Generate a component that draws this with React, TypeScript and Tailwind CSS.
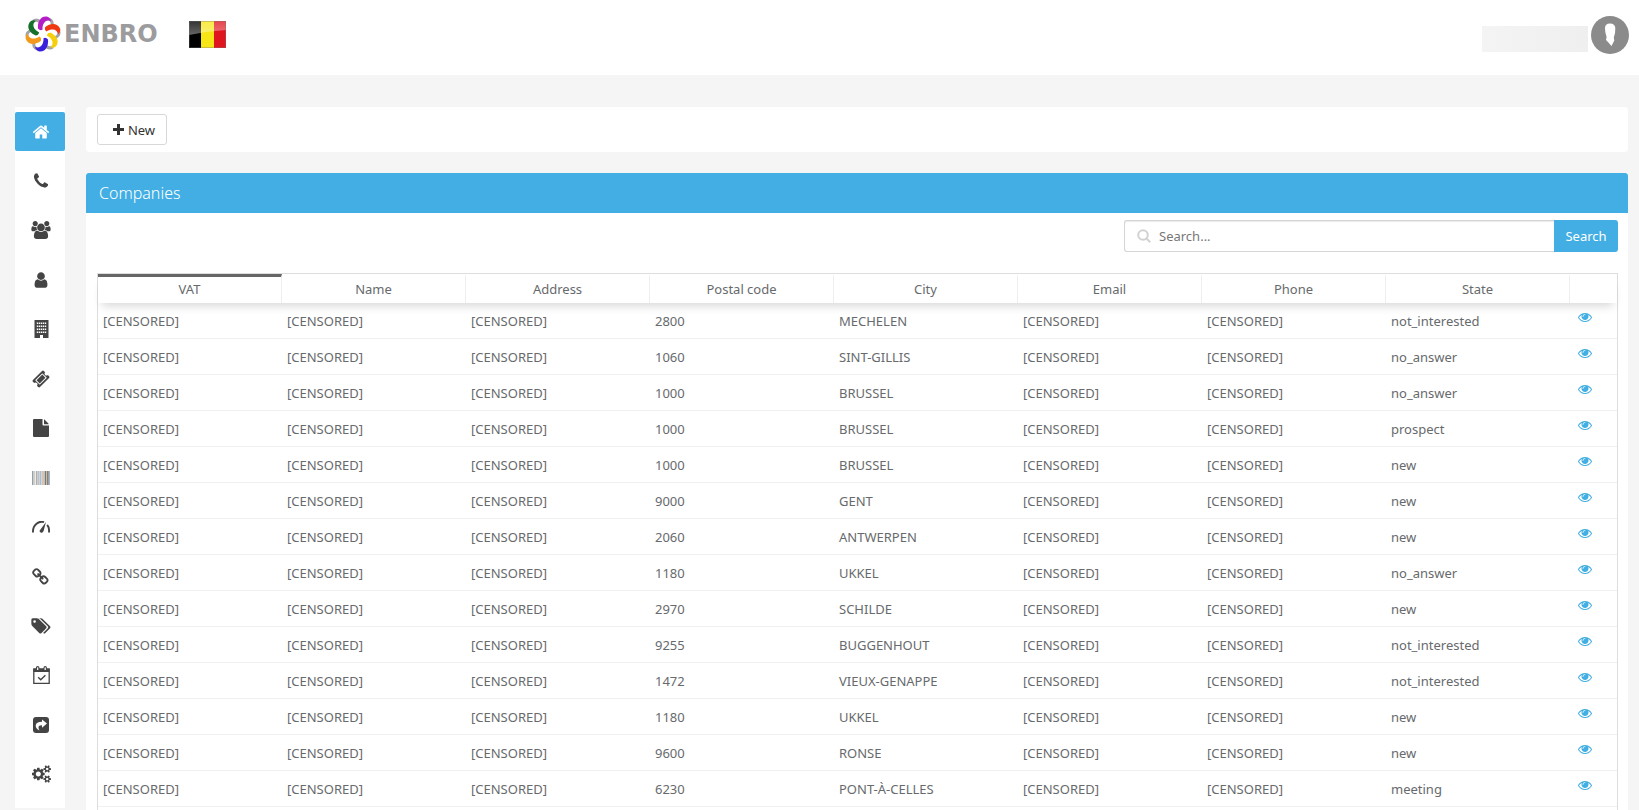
import React from "react";

const BIG = "0 0 1792 1792";

function Glyph({ d, className, viewBox = BIG }: { d: string; className: string; viewBox?: string }) {
  return (
    <svg viewBox={viewBox} className={className} fill="currentColor" overflow="visible" aria-hidden="true">
      <path d={d} fillRule="evenodd" />
    </svg>
  );
}

const paths = {
  home: "M1472 992v480q0 26-19 45t-45 19h-384v-384h-256v384h-384q-26 0-45-19t-19-45v-480q0-1 .5-3t.5-3l575-474 575 474q1 2 1 6zm223-69l-62 74q-8 9-21 11h-3q-13 0-21-7l-692-577-692 577q-12 8-24 7-13-2-21-11l-62-74q-8-10-7-23.5t11-21.5l719-599q32-26 76-26t76 26l244 204v-195q0-14 9-23t23-9h192q14 0 23 9t9 23v408l219 182q10 8 11 21.5t-7 23.5z",
  phone: "M1600 1240q0 27-10 70.5t-21 68.5q-21 50-122 106-94 51-186 51-27 0-53-3.5t-57.5-12.5-47-14.5-55.5-20.5-49-18q-98-35-175-83-127-79-264-216t-216-264q-48-77-83-175-3-9-18-49t-20.5-55.5-14.5-47-12.5-57.5-3.5-53q0-92 51-186 56-101 106-122 25-11 68.5-21t70.5-10q14 0 21 3 18 6 53 76 11 19 30 54t35 63.5 31 53.5q3 4 17.5 25t21.5 35.5 7 28.5q0 20-28.5 50t-62 55-62 53-28.5 46q0 9 5 22.5t8.5 20.5 14 24 11.5 19q76 137 174 235t235 174q2 1 19 11.5t24 14 20.5 8.5 22.5 5q18 0 46-28.5t53-62 55-62 50-28.5q14 0 28.5 7t35.5 21.5 25 17.5q25 15 53.5 31t63.5 35 54 30q70 35 76 53 3 7 3 21z",
  users: "M529 896q-162 5-265 128h-134q-82 0-138-40.5t-56-118.5q0-353 124-353 6 0 43.5 21t97.5 42.5 119 21.5q67 0 133-23-5 37-5 66 0 139 81 256zm1071 637q0 120-73 189.5t-194 69.5h-874q-121 0-194-69.5t-73-189.5q0-53 3.5-103.5t14-109 26.5-108.5 43-97.5 62-81 85.5-53.5 111.5-20q10 0 43 21.5t73 48 107 48 135 21.5 135-21.5 107-48 73-48 43-21.5q61 0 111.5 20t85.5 53.5 62 81 43 97.5 26.5 108.5 14 109 3.5 103.5zm-1024-1277q0 106-75 181t-181 75-181-75-75-181 75-181 181-75 181 75 75 181zm704 384q0 159-112.5 271.5t-271.5 112.5-271.5-112.5-112.5-271.5 112.5-271.5 271.5-112.5 271.5 112.5 112.5 271.5zm576 225q0 78-56 118.5t-138 40.5h-134q-103-123-265-128 81-117 81-256 0-29-5-66 66 23 133 23 59 0 119-21.5t97.5-42.5 43.5-21q124 0 124 353zm-128-609q0 106-75 181t-181 75-181-75-75-181 75-181 181-75 181 75 75 181z",
  user: "M1536 1399q0 109-62.5 187t-150.5 78h-854q-88 0-150.5-78t-62.5-187q0-85 8.5-160.5t31.5-152 58.5-131 94-89 134.5-34.5q131 128 313 128t313-128q76 0 134.5 34.5t94 89 58.5 131 31.5 152 8.5 160.5zm-256-887q0 159-112.5 271.5t-271.5 112.5-271.5-112.5-112.5-271.5 112.5-271.5 271.5-112.5 271.5 112.5 112.5 271.5z",
  ticket: "M1024 452l316 316-572 572-316-316zm-211 979l618-618q19-19 19-45t-19-45l-362-362q-18-18-45-18t-45 18l-618 618q-19 19-19 45t19 45l362 362q18 18 45 18t45-18zm889-637l-907 908q-37 37-90.5 37t-90.5-37l-126-126q56-56 56-136t-56-136-136-56-136 56l-125-126q-37-37-37-90.5t37-90.5l907-906q37-37 90.5-37t90.5 37l125 125q-56 56-56 136t56 136 136 56 136-56l126 125q37 37 37 90.5t-37 90.5z",
  link: "M1456 1216q0-40-28-68l-208-208q-28-28-68-28-42 0-72 32 3 3 19 18.5t21.5 21.5 15 19 13 25.5 3.5 27.5q0 40-28 68t-68 28q-15 0-27.5-3.5t-25.5-13-19-15-21.5-21.5-18.5-19q-33 31-33 73 0 40 28 68l206 207q27 27 68 27 40 0 68-26l147-146q28-28 28-67zm-703-705q0-40-28-68l-206-207q-28-28-68-28-39 0-68 27l-147 146q-28 28-28 67 0 40 28 68l208 208q27 27 68 27 42 0 72-31-3-3-19-18.5t-21.5-21.5-15-19-13-25.5-3.5-27.5q0-40 28-68t68-28q15 0 27.5 3.5t25.5 13 19 15 21.5 21.5 18.5 19q33-31 33-73zm895 705q0 120-85 203l-147 146q-83 83-203 83-121 0-204-85l-206-207q-83-83-83-203 0-123 88-209l-88-88q-86 88-208 88-120 0-204-84l-208-208q-84-84-84-204t85-203l147-146q83-83 203-83 121 0 204 85l206 207q83 83 83 203 0 123-88 209l88 88q86-88 208-88 120 0 204 84l208 208q84 84 84 204z",
  tags: "M384 448q0-53-37.5-90.5t-90.5-37.5-90.5 37.5-37.5 90.5 37.5 90.5 90.5 37.5 90.5-37.5 37.5-90.5zm1067 576q0 53-37 90l-491 492q-39 37-91 37-53 0-90-37l-715-716q-38-37-64.5-101t-26.5-117v-416q0-52 38-90t90-38h416q53 0 117 26.5t102 64.5l715 714q37 39 37 91zm384 0q0 53-37 90l-491 492q-39 37-91 37-36 0-59-14t-53-45l470-470q37-37 37-90 0-52-37-91l-715-714q-38-38-102-64.5t-117-26.5h224q53 0 117 26.5t102 64.5l715 714q37 39 37 91z",
  cogs: "M896 896q0-106-75-181t-181-75-181 75-75 181 75 181 181 75 181-75 75-181zm768 512q0-52-38-90t-90-38-90 38-38 90q0 53 37.5 90.5t90.5 37.5 90.5-37.5 37.5-90.5zm0-1024q0-52-38-90t-90-38-90 38-38 90q0 53 37.5 90.5t90.5 37.5 90.5-37.5 37.5-90.5zm-384 421v185q0 10-7 19.5t-16 10.5l-155 24q-11 35-32 76 34 48 90 115 7 11 7 20 0 12-7 19-23 30-82.5 89.5t-78.5 59.5q-11 0-21-7l-115-90q-37 19-77 31-11 108-23 155-7 24-30 24h-186q-11 0-20-7.5t-10-17.5l-23-153q-34-10-75-31l-118 89q-7 7-20 7-11 0-21-8-144-133-144-160 0-9 7-19 10-14 41-53t47-61q-23-44-35-82l-152-24q-10-1-17-9.5t-7-19.5v-185q0-10 7-19.5t16-10.5l155-24q11-35 32-76-34-48-90-115-7-11-7-20 0-12 7-20 22-30 82-89t79-59q11 0 21 7l115 90q34-18 77-32 11-108 23-154 7-24 30-24h186q11 0 20 7.5t10 17.5l23 153q34 10 75 31l118-89q8-7 20-7 11 0 21 8 144 133 144 160 0 8-7 19-12 16-42 54t-45 60q23 48 34 82l152 23q10 2 17 10.5t7 19.5zm640 533v140q0 16-149 31-12 27-30 52 51 113 51 138 0 4-4 7-122 71-124 71-8 0-46-47t-52-68q-20 2-30 2t-30-2q-14 21-52 68t-46 47q-2 0-124-71-4-3-4-7 0-25 51-138-18-25-30-52-149-15-149-31v-140q0-16 149-31 13-29 30-52-51-113-51-138 0-4 4-7 4-2 35-20t59-34 30-16q8 0 46 46.5t52 67.5q20-2 30-2t30 2q51-71 92-112l6-2q4 0 124 70 4 3 4 7 0 25-51 138 17 23 30 52 149 15 149 31zm0-1024v140q0 16-149 31-12 27-30 52 51 113 51 138 0 4-4 7-122 71-124 71-8 0-46-47t-52-68q-20 2-30 2t-30-2q-14 21-52 68t-46 47q-2 0-124-71-4-3-4-7 0-25 51-138-18-25-30-52-149-15-149-31v-140q0-16 149-31 13-29 30-52-51-113-51-138 0-4 4-7 4-2 35-20t59-34 30-16q8 0 46 46.5t52 67.5q20-2 30-2t30 2q51-71 92-112l6-2q4 0 124 70 4 3 4 7 0 25-51 138 17 23 30 52 149 15 149 31z",
  eye: "M1664 960q-152-236-381-353 61 104 61 225 0 185-131.5 316.5t-316.5 131.5-316.5-131.5-131.5-316.5q0-121 61-225-229 117-381 353 133 205 333.5 326.5t434.5 121.5 434.5-121.5 333.5-326.5zm-720-384q0-20-14-34t-34-14q-125 0-214.5 89.5t-89.5 214.5q0 20 14 34t34 14 34-14 14-34q0-86 61-147t147-61q20 0 34-14t14-34zm848 384q0 34-20 69-140 230-376.5 368.5t-499.5 138.5-499.5-139-376.5-368q-20-35-20-69t20-69q140-229 376.5-368t499.5-139 499.5 139 376.5 368q20 35 20 69z",
};

function BuildingIcon() {
  const rows = [3, 6, 9, 12];
  const cols = [3, 5, 7, 9, 11];
  return (
    <svg viewBox="0 0 15 18" className="h-[18px] w-[15px]" aria-hidden="true">
      <path d="M.5 0h14v18H9v-3H6v3H.5z" fill="currentColor" />
      {rows.map((y) => cols.map((x) => <rect key={`${x}-${y}`} x={x - 0.2} y={y - 0.5} width="1.4" height="1.5" fill="#fff" />))}
    </svg>
  );
}

function FileIcon() {
  return (
    <svg viewBox="0 0 16 18" className="h-[18px] w-4" fill="currentColor" aria-hidden="true">
      <path d="M1 0h8.500v5.500q0 1 1 1H16V17q0 1-1 1H1q-1 0-1-1V1q0-1 1-1zM11 .3q.4.2.7.500l3.500 3.500q.3.300.5.900H11z" />
    </svg>
  );
}

function BarcodeIcon() {
  const bars: [number, number, string][] = [
    [0, 1, "#a89b90"], [1, 1, "#b7d0e2"], [2, 1, "#dccdc2"], [3, 1, "#e6ecef"], [4, 1, "#a3b1c0"], [5, 1, "#d6cbc0"],
    [6, 1, "#b4c4d1"], [7, 1, "#d9cfd0"], [8, 1, "#b0bcc8"], [9, 1, "#cdd8e0"], [10, 2, "#d8c2b1"],
    [12, 1, "#b9c4cb"], [13, 1, "#7d7770"], [14, 1, "#c9bda4"], [15, 1, "#85807a"], [16, 1, "#8ca3c0"], [17, 1, "#b4b0b0"],
  ];
  return (
    <svg viewBox="0 0 18 14" className="h-[14px] w-[18px]" aria-hidden="true">
      {bars.map(([x, w, c]) => <rect key={x} x={x} width={w} height="14" fill={c} />)}
    </svg>
  );
}

function GaugeIcon() {
  return (
    <svg viewBox="0 0 18 12" className="h-3 w-[18px]" aria-hidden="true">
      <path d="M1 11.500Q.6 6 4.500 2.800T12 1.200M15.200 3.800Q17.500 6.500 17 11.500" fill="none" stroke="currentColor" strokeWidth="1.900" />
      <path d="M14 1L11.500 10.300Q10.500 12.200 8.700 11.400T8.100 9z" fill="currentColor" />
    </svg>
  );
}

function CalendarIcon() {
  return (
    <svg viewBox="0 0 17 18" className="h-[18px] w-[17px]" fill="none" stroke="currentColor" aria-hidden="true">
      <path d="M.8 3h15.400v14.300H.8z" strokeWidth="1.300" />
      <path d="M.5 3h16v3H.5z" fill="currentColor" stroke="none" />
      <rect x="3.500" y=".6" width="2.400" height="4" rx="1.200" fill="#fff" strokeWidth="1.100" />
      <rect x="11" y=".6" width="2.400" height="4" rx="1.200" fill="#fff" strokeWidth="1.100" />
      <path d="M5.200 11.200l2.500 2.500 4.700-4.500" strokeWidth="1.400" />
    </svg>
  );
}

function ShareIcon() {
  return (
    <svg viewBox="0 0 16 16" className="size-4" aria-hidden="true">
      <rect width="16" height="16" rx="3" fill="currentColor" />
      <path d="M9 2.500l5 4-5 4.200V8.300Q5.500 8.200 5.500 10.500q0 1.500 1 3Q2.500 11.500 2.700 8.500 3 4.800 9 4.800z" fill="#fff" />
    </svg>
  );
}

const nav: { label: string; icon: React.ReactNode }[] = [
  { label: "Home", icon: <Glyph d={paths.home} className="size-[18px]" /> },
  { label: "Calls", icon: <Glyph d={paths.phone} className="size-[18px]" /> },
  { label: "Teams", icon: <Glyph d={paths.users} className="size-[18px]" /> },
  { label: "Contacts", icon: <Glyph d={paths.user} className="size-[18px]" /> },
  { label: "Companies", icon: <BuildingIcon /> },
  { label: "Tickets", icon: <Glyph d={paths.ticket} className="size-[18px]" /> },
  { label: "Documents", icon: <FileIcon /> },
  { label: "Products", icon: <BarcodeIcon /> },
  { label: "Dashboard", icon: <GaugeIcon /> },
  { label: "Links", icon: <Glyph d={paths.link} className="size-[18px]" /> },
  { label: "Tags", icon: <Glyph d={paths.tags} className="size-[18px]" /> },
  { label: "Calendar", icon: <CalendarIcon /> },
  { label: "Share", icon: <ShareIcon /> },
  { label: "Settings", icon: <Glyph d={paths.cogs} viewBox="0 0 1920 1792" className="h-[18px] w-[19px]" /> },
];

const columns = ["VAT", "Name", "Address", "Postal code", "City", "Email", "Phone", "State"];

const companies: [string, string, string][] = [
  ["2800", "MECHELEN", "not_interested"],
  ["1060", "SINT-GILLIS", "no_answer"],
  ["1000", "BRUSSEL", "no_answer"],
  ["1000", "BRUSSEL", "prospect"],
  ["1000", "BRUSSEL", "new"],
  ["9000", "GENT", "new"],
  ["2060", "ANTWERPEN", "new"],
  ["1180", "UKKEL", "no_answer"],
  ["2970", "SCHILDE", "new"],
  ["9255", "BUGGENHOUT", "not_interested"],
  ["1472", "VIEUX-GENAPPE", "not_interested"],
  ["1180", "UKKEL", "new"],
  ["9600", "RONSE", "new"],
  ["6230", "PONT-À-CELLES", "meeting"],
];

const HIDDEN = "[CENSORED]";

function LogoMark() {
  const petals: [string, number][] = [
    ["#b31fc4", 0], ["#ee3a12", 60], ["#f5cf0c", 120], ["#3a1fdc", 180], ["#f39a1e", 240], ["#16702c", 300],
  ];
  return (
    <svg viewBox="-18 -18 36 36" className="size-9" fill="none" aria-hidden="true">
      {petals.map(([c, r]) => (
        <path key={c} d="M6 -15Q10.500 -13 8.800 -7.500" stroke="#a3a3a7" strokeWidth="3" transform={`rotate(${r})`} />
      ))}
      {petals.map(([c, r]) => (
        <path key={c} d="M-5 -5.500C-5.500 -11 -3.500 -17.800 3.500 -17.500Q7.200 -17 8 -12.800C3.500 -15 -.8 -11.500 -.5 -4.300Q-3 -3 -5 -5.500z" fill={c} transform={`rotate(${r})`} />
      ))}
    </svg>
  );
}

function Flag() {
  return (
    <svg viewBox="0 0 37 27" className="h-[27px] w-[37px]" role="img" aria-label="Belgium">
      <defs>
        <linearGradient id="gloss" x1="0" y1="0" x2="0" y2="1">
          <stop offset="0" stopColor="#fff" stopOpacity=".2" />
          <stop offset="1" stopColor="#fff" stopOpacity=".4" />
        </linearGradient>
      </defs>
      <rect width="12" height="27" fill="#000" />
      <rect x="12" width="13" height="27" fill="#f7e617" />
      <rect x="25" width="12" height="27" fill="#e0161f" />
      <path d="M0 0h37v9Q18 10 0 14z" fill="url(#gloss)" />
      <rect x=".5" y=".5" width="36" height="26" fill="none" stroke="#777" strokeOpacity=".35" />
    </svg>
  );
}

function Avatar() {
  return (
    <svg viewBox="0 0 38 38" className="size-[38px]" aria-hidden="true">
      <circle cx="19" cy="19" r="19" fill="#8b8b8b" />
      <path d="M14 12Q14 7.500 19 7.500T24.300 12Q24.500 18 22.800 21.500L23.300 24.500 20.500 30 16.500 25.500 15 24 15.600 21Q13.800 16 14 12z" fill="#fff" />
    </svg>
  );
}

export default function App() {
  return (
    <div className="flex min-h-screen flex-col bg-[#f5f5f5] font-['Noto_Sans','Open_Sans',sans-serif] text-[13px] leading-5 text-[#676a6c]">
      <header className="flex h-[75px] items-start justify-between bg-white pr-[10px] pl-[25px]">
        <div className="flex items-center gap-[22px] pt-4">
          <a href="#home" className="flex items-center gap-[3px]">
            <LogoMark />
            <span className="min-w-[103px] font-['DejaVu_Sans',sans-serif] text-[24px] leading-9 font-bold text-[#9c9c9f]">ENBRO</span>
          </a>
          <Flag />
        </div>
        <div className="flex items-center gap-[3px] pt-4">
          <span className="mt-2 h-[26px] w-[106px] bg-linear-to-r from-[#f4f4f4] to-[#efefef]" />
          <button type="button" aria-label="Account"><Avatar /></button>
        </div>
      </header>

      <div className="flex flex-1 items-stretch gap-[21px] pt-8 pr-[11px] pl-[15px]">
        <nav aria-label="Main" className="flex min-h-[calc(100vh-109px)] w-[50px] shrink-0 flex-col justify-between self-start bg-white pt-[5px] pb-[14px]">
          {nav.map(({ label, icon }, i) => (
            <a
              key={label}
              href="#menu"
              aria-label={label}
              className={i === 0
                ? "flex h-[39px] items-center justify-center rounded-xs bg-[#42aee3] pl-[2px] text-white"
                : "flex h-[39px] items-center justify-center pl-[2px] text-[#444]"}
            >
              {icon}
            </a>
          ))}
        </nav>

        <main className="flex min-w-0 flex-1 flex-col">
          <div className="rounded-sm bg-white px-[11px] py-[7px]">
            <button type="button" className="flex h-[31px] w-[70px] items-center justify-center gap-1 rounded-[3px] border border-[#d8d8d8] pl-1 text-[#333]">
              <svg viewBox="0 0 11 11" className="size-[11px]" fill="currentColor" aria-hidden="true">
                <path d="M4 0h3v4h4v3H7v4H4V7H0V4h4z" />
              </svg>
              New
            </button>
          </div>

          <section className="mt-[21px] flex flex-1 flex-col bg-white">
            <h1 className="rounded-t-[3px] bg-[#42aee3] px-[13px] text-[16px] leading-10 font-light text-white">Companies</h1>
            <div className="flex flex-1 flex-col pt-[7px] pr-[10px] pl-[11px]">
              <form className="flex h-8 w-[494px] max-w-full self-end" onSubmit={(e) => e.preventDefault()}>
                <label className="flex flex-1 items-center gap-2 rounded-l-[3px] border border-r-0 border-[#d5d5d5] pl-3 shadow-[inset_0_1px_1px_rgba(0,0,0,0.08)]">
                  <svg viewBox="0 0 14 14" className="size-[14px] text-[#d2d2d2]" fill="none" stroke="currentColor" strokeWidth="2" aria-hidden="true">
                    <circle cx="6" cy="6" r="4.800" />
                    <path d="M9.500 9.500l3.700 3.700" />
                  </svg>
                  <input type="text" aria-label="Search companies" placeholder="Search..." className="min-w-0 flex-1 bg-transparent outline-none placeholder:text-[#777]" />
                </label>
                <button type="submit" className="w-16 rounded-r-[3px] bg-[#42aee3] text-white">Search</button>
              </form>

              <div className="mt-[21px] flex-1 border-x border-t border-[#ddd]">
                <table className="w-full table-fixed border-separate border-spacing-0">
                  <thead>
                    <tr className="shadow-[0_7px_10px_-4px_rgba(0,0,0,0.16)]">
                      {columns.map((c, i) => (
                        <th
                          key={c}
                          scope="col"
                          className={i === 0
                            ? "h-[29px] border-t-3 border-r border-t-[#666] border-r-[#eee] p-0 pb-[3px] font-normal"
                            : "h-[29px] border-t-3 border-r border-t-transparent border-r-[#eee] p-0 pb-[3px] font-normal"}
                        >
                          {c}
                        </th>
                      ))}
                      <th scope="col" aria-label="View" className="w-[47px]" />
                    </tr>
                  </thead>
                  <tbody>
                    {companies.map(([postal, city, state], r) => (
                      <tr key={r}>
                        {[HIDDEN, HIDDEN, HIDDEN, postal, city, HIDDEN, HIDDEN, state].map((v, c) => (
                          <td key={c} className="h-9 border-b border-[#f0f0f0] p-0 pl-[5px]">{v}</td>
                        ))}
                        <td className="h-9 border-b border-[#f0f0f0] p-0 pb-2 pl-2">
                          <a href="#view" aria-label={`View company ${r + 1}`} className="block w-[14px] text-[#42aee3]">
                            <Glyph d={paths.eye} className="size-[14px]" />
                          </a>
                        </td>
                      </tr>
                    ))}
                  </tbody>
                </table>
              </div>
            </div>
          </section>
        </main>
      </div>
    </div>
  );
}
